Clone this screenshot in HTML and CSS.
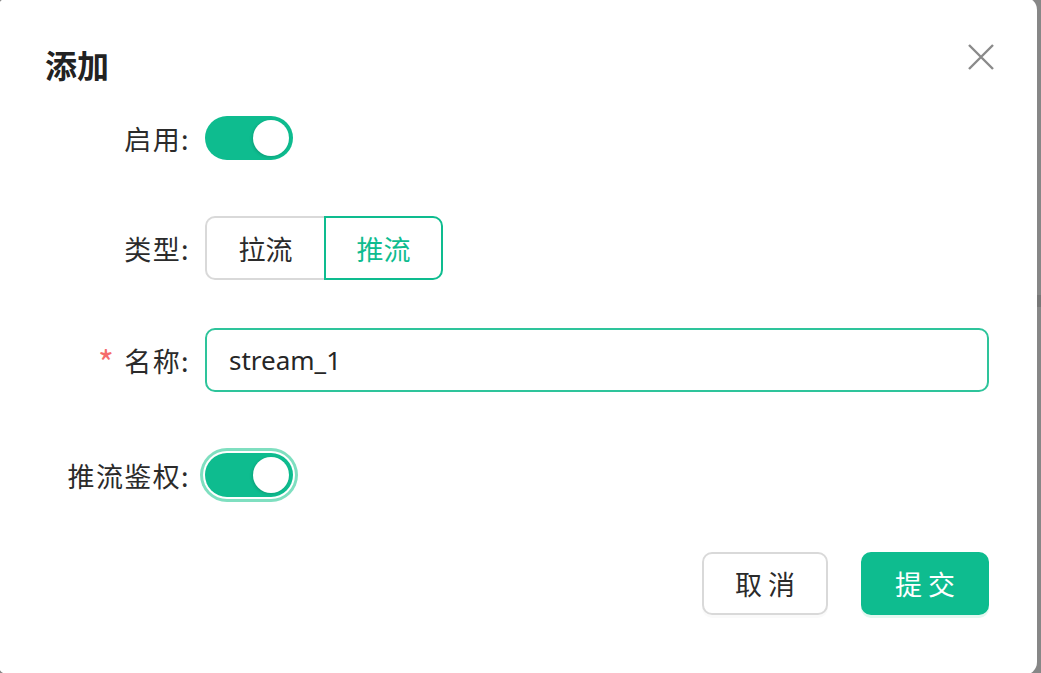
FILE: index.html
```html
<!DOCTYPE html>
<html lang="zh">
<head>
<meta charset="utf-8">
<title>添加</title>
<link rel="stylesheet" href="styles.css">
</head>
<body>
<div class="edge-mark"></div>
<div class="dialog">
  <div class="header">
    <h2 class="title">添加</h2>
    <button class="close" aria-label="关闭">
      <svg width="26" height="26" viewBox="0 0 26 26"><path d="M1 1 L25 25 M25 1 L1 25" stroke="#8a8a8a" stroke-width="2.4" fill="none"/></svg>
    </button>
  </div>
  <form class="form">
    <div class="item item-1">
      <label class="label">启用:</label>
      <div class="control"><span class="switch"><span class="knob"></span></span></div>
    </div>
    <div class="item item-2">
      <label class="label">类型:</label>
      <div class="control">
        <div class="radio-group">
          <span class="radio">拉流</span>
          <span class="radio active">推流</span>
        </div>
      </div>
    </div>
    <div class="item item-3">
      <label class="label"><span class="req">*</span>名称:</label>
      <div class="control grow"><div class="input">stream_1</div></div>
    </div>
    <div class="item item-4">
      <label class="label">推流鉴权:</label>
      <div class="control"><span class="switch focused"><span class="knob"></span></span></div>
    </div>
  </form>
  <div class="footer">
    <button class="btn">取 消</button>
    <button class="btn primary">提 交</button>
  </div>
</div>
</body>
</html>
```
FILE: styles.css
```css
html, body {
  margin: 0;
  padding: 0;
  overflow: hidden;
  height: 673px;
}
body {
  background: #878787;
  font-family: "Noto Sans", "Noto Sans CJK SC", sans-serif;
  color: #2a2a2a;
  position: relative;
}
.edge-mark {
  position: absolute;
  right: 0;
  top: 295px;
  width: 4px;
  height: 12px;
  background: #777;
}
.dialog {
  margin: -3px 0 0 -3px;
  width: 1040px;
  height: 678px;
  background: #fff;
  border-radius: 13px;
  box-sizing: border-box;
  padding: 0 48px 0 49px;
}
.header {
  display: flex;
  justify-content: space-between;
  align-items: flex-start;
  height: 114px;
}
.title {
  margin: 46px 0 0 -1px;
  font-family: "Noto Sans CJK SC", sans-serif;
  font-size: 32px;
  font-weight: 700;
  color: #222;
  line-height: 42px;
}
.close {
  border: 0;
  background: none;
  padding: 0;
  margin: 47px -5px 0 0;
  width: 26px;
  height: 26px;
  display: flex;
}
.form {
  display: flex;
  flex-direction: column;
}
.item {
  display: flex;
  align-items: center;
  height: 64px;
}
.item-1 { margin-top: -5px; }
.item-2 { margin-top: 46px; }
.item-3 { margin-top: 48px; }
.item-4 { margin-top: 51px; }
.label {
  width: 159px;
  box-sizing: border-box;
  padding-right: 15px;
  text-align: right;
  font-family: "Noto Sans CJK SC", sans-serif;
  font-size: 27px;
  letter-spacing: 1.4px;
  color: #2b2b2b;
  flex: none;
}
.req {
  color: #f56c6c;
  margin-right: 9px;
  font-size: 34px;
  vertical-align: -4px;
  line-height: 1;
}
.control { display: flex; }
.grow { flex: 1; }
.grow .input { flex: 1; }
.switch {
  position: relative;
  display: block;
  width: 88px;
  height: 44px;
  border-radius: 22px;
  background: #0ebc8f;
}
.switch.focused {
  box-shadow: 0 0 0 2px #fff, 0 0 0 5px #7fdfc0;
}
.knob {
  position: absolute;
  right: 4px;
  top: 4px;
  width: 36px;
  height: 36px;
  border-radius: 50%;
  background: #fff;
  box-shadow: -1px 1px 3px rgba(0,0,0,0.15);
}
.radio-group {
  display: flex;
}
.radio {
  width: 119px;
  height: 64px;
  box-sizing: border-box;
  display: flex;
  align-items: center;
  justify-content: center;
  font-family: "Noto Sans CJK SC", sans-serif;
  font-size: 27px;
  color: #2b2b2b;
  border: 2px solid #d9d9d9;
  border-right: 0;
  border-radius: 10px 0 0 10px;
}
.radio.active {
  color: #0ebc8f;
  border: 2px solid #0ebc8f;
  border-radius: 0 10px 10px 0;
}
.input {
  height: 64px;
  box-sizing: border-box;
  border: 2px solid #2ec49b;
  border-radius: 10px;
  padding: 0 22px;
  display: flex;
  align-items: center;
  font-size: 26px;
  color: #262626;
}
.footer {
  display: flex;
  justify-content: flex-end;
  gap: 33px;
  margin-top: 45px;
}
.btn {
  height: 63px;
  width: 126px;
  border: 2px solid #d9d9d9;
  border-radius: 10px;
  background: #fff;
  font-family: "Noto Sans CJK SC", sans-serif;
  font-size: 27px;
  color: #2b2b2b;
  box-shadow: 0 3px 0 rgba(0,0,0,0.02);
  padding: 0;
}
.btn.primary {
  width: 128px;
  background: #0ebc8f;
  border-color: #0ebc8f;
  color: #fff;
  box-shadow: 0 3px 0 #e3f8f0;
}
```
